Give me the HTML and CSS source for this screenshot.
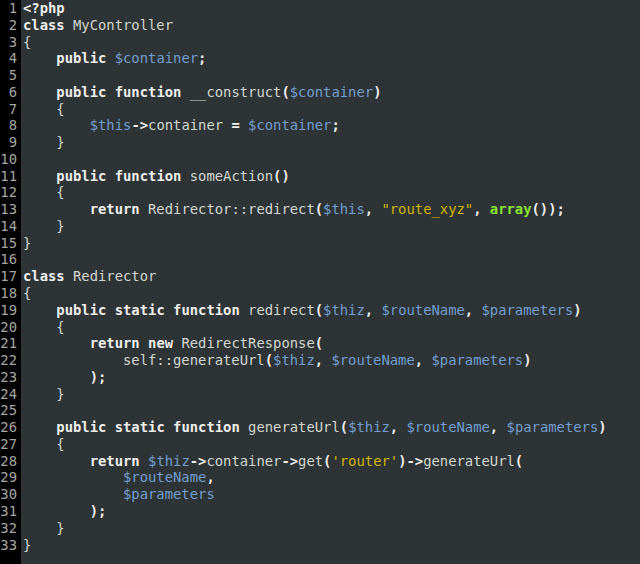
FILE: index.html
```html
<!DOCTYPE html>
<html>
<head>
<meta charset="utf-8">
<link rel="stylesheet" href="styles.css">
</head>
<body>
<div class="editor">
<pre class="gutter">1
2
3
4
5
6
7
8
9
10
11
12
13
14
15
16
17
18
19
20
21
22
23
24
25
26
27
28
29
30
31
32
33</pre>
<pre class="code"><span class="k">&lt;?php</span>
<span class="k">class</span> MyController
{
    <span class="k">public</span> <span class="v">$container</span><span class="o">;</span>

    <span class="k">public</span> <span class="k">function</span> __construct<span class="o">(</span><span class="v">$container</span><span class="o">)</span>
    {
        <span class="v">$this</span><span class="o">-&gt;</span>container <span class="o">=</span> <span class="v">$container</span><span class="o">;</span>
    }

    <span class="k">public</span> <span class="k">function</span> someAction<span class="o">()</span>
    {
        <span class="k">return</span> Redirector::redirect<span class="o">(</span><span class="v">$this</span><span class="o">,</span> <span class="s">"route_xyz"</span><span class="o">,</span> <span class="f">array</span><span class="o">());</span>
    }
}

<span class="k">class</span> Redirector
{
    <span class="k">public</span> <span class="k">static</span> <span class="k">function</span> redirect<span class="o">(</span><span class="v">$thiz</span><span class="o">,</span> <span class="v">$routeName</span><span class="o">,</span> <span class="v">$parameters</span><span class="o">)</span>
    {
        <span class="k">return</span> <span class="k">new</span> RedirectResponse<span class="o">(</span>
            self::generateUrl<span class="o">(</span><span class="v">$thiz</span><span class="o">,</span> <span class="v">$routeName</span><span class="o">,</span> <span class="v">$parameters</span><span class="o">)</span>
        <span class="o">);</span>
    }

    <span class="k">public</span> <span class="k">static</span> <span class="k">function</span> generateUrl<span class="o">(</span><span class="v">$thiz</span><span class="o">,</span> <span class="v">$routeName</span><span class="o">,</span> <span class="v">$parameters</span><span class="o">)</span>
    {
        <span class="k">return</span> <span class="v">$thiz</span><span class="o">-&gt;</span>container<span class="o">-&gt;</span>get<span class="o">(</span><span class="s">'router'</span><span class="o">)-&gt;</span>generateUrl<span class="o">(</span>
            <span class="v">$routeName</span><span class="o">,</span>
            <span class="v">$parameters</span>
        <span class="o">);</span>
    }
}</pre>
</div>
</body>
</html>
```
FILE: styles.css
```css
html, body {
  margin: 0;
  padding: 0;
  background: #2e3436;
}
.editor {
  display: flex;
  min-height: 100vh;
  font-family: "DejaVu Sans Mono", monospace;
  font-size: 13.85px;
  line-height: 16.77px;
}
pre {
  margin: 0;
  font: inherit;
}
.gutter {
  background: #000000;
  color: #a4a6a1;
  width: 17px;
  padding-right: 4px;
  text-align: right;
}
.code {
  color: #d3d7cf;
  padding-left: 2px;
  flex: 1;
}
.k {
  color: #eeeeec;
  font-weight: bold;
}
.o {
  color: #eeeeec;
  font-weight: bold;
}
.v {
  color: #729fcf;
}
.s {
  color: #d0b400;
}
.f {
  color: #8ae234;
  font-weight: bold;
}
```
